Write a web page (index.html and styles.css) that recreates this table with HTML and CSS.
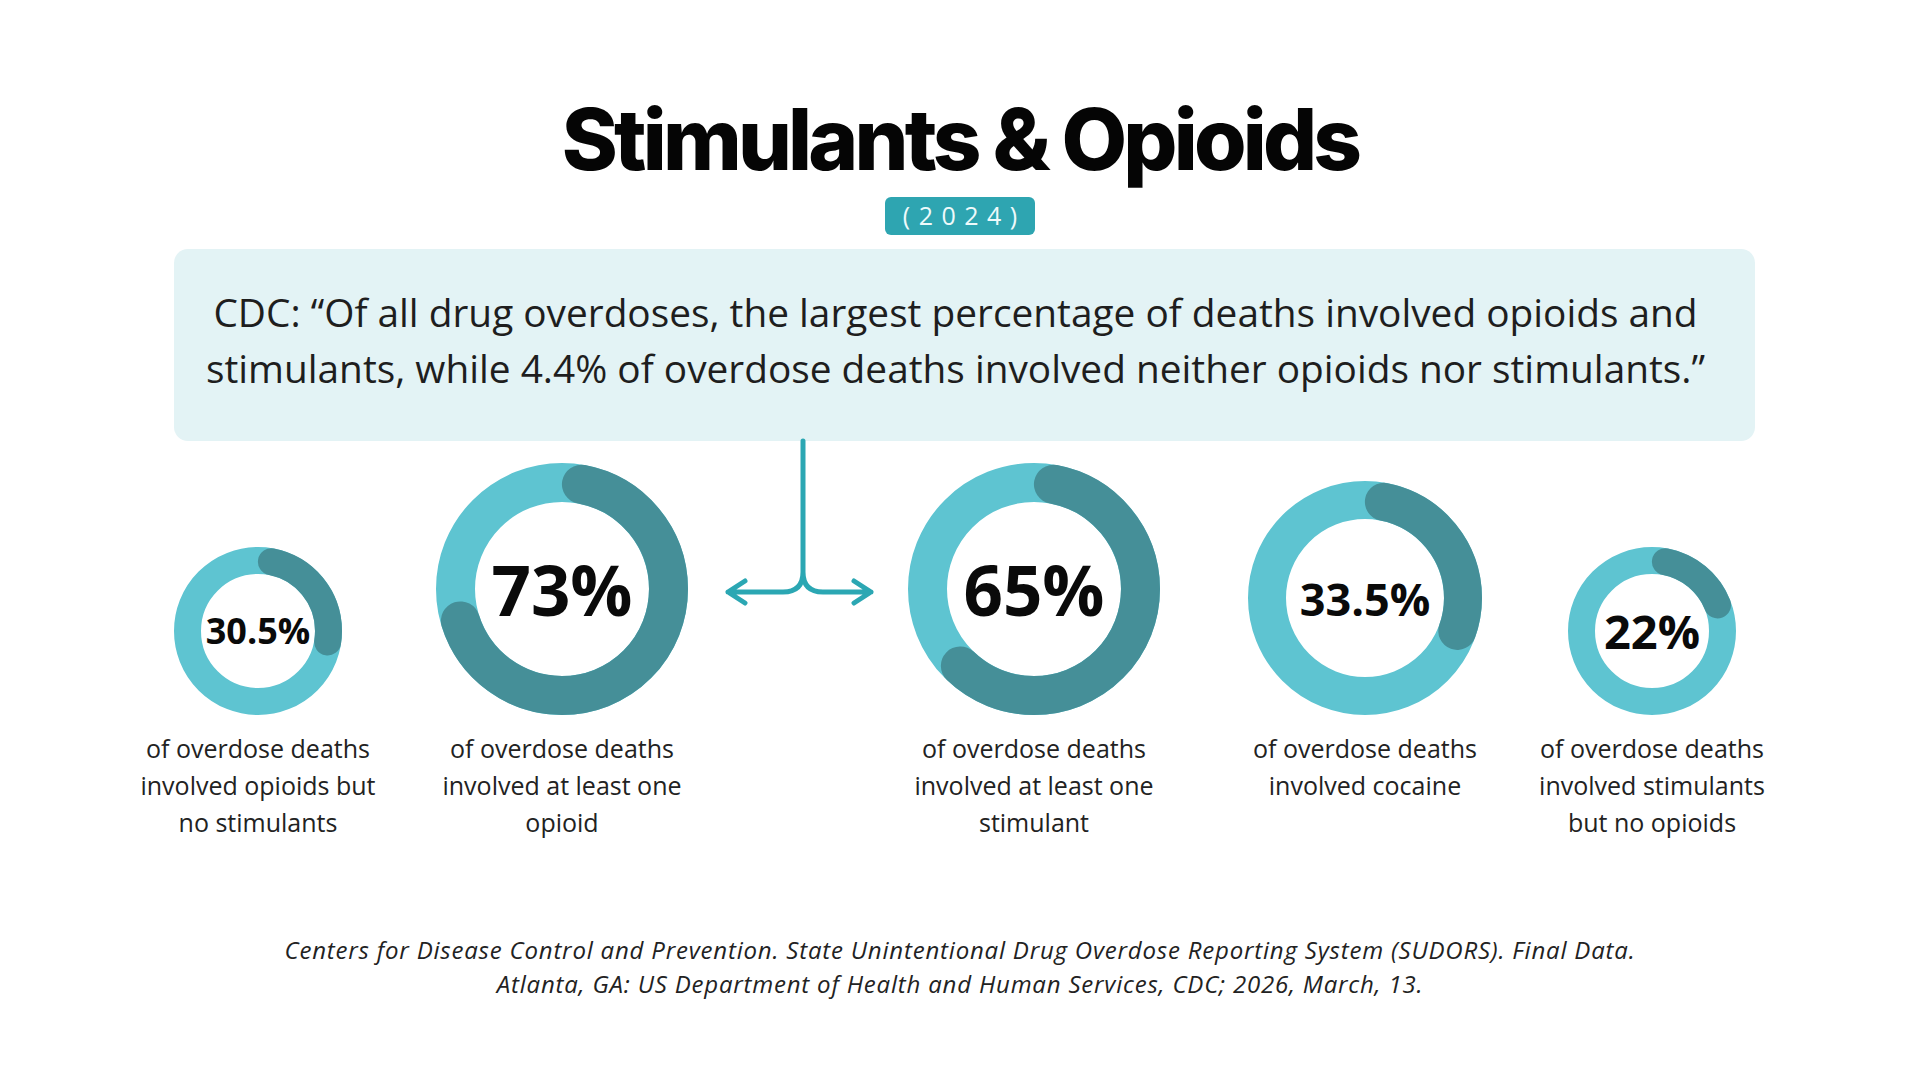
FILE: index.html
```html
<!DOCTYPE html>
<html lang="en">
<head>
<meta charset="utf-8">
<title>Stimulants &amp; Opioids</title>
<link rel="stylesheet" href="styles.css">
</head>
<body>
<main class="page">
  <h1 class="title">Stimulants &amp; Opioids</h1>
  <div class="year">(2024)</div>
  <section class="quote">
    <p>CDC: “Of all drug overdoses, the largest percentage of deaths involved opioids and<br>stimulants, while 4.4% of overdose deaths involved neither opioids nor stimulants.”</p>
  </section>

  <section class="stats">
    <div class="donut donut-sm">
      <svg viewBox="0 0 168 168" class="ring">
        <circle class="track" cx="84" cy="84" r="70.5" stroke-width="27"/>
        <circle class="arc" cx="84" cy="84" r="70.5" stroke-width="27" stroke-dasharray="108.1 1000" stroke-dashoffset="-13.5"/>
      </svg>
      <span class="pct pct-s1">30.5%</span>
    </div>
    <div class="donut donut-lg">
      <svg viewBox="0 0 252 252" class="ring">
        <circle class="track" cx="126" cy="126" r="106.5" stroke-width="39"/>
        <circle class="arc" cx="126" cy="126" r="106.5" stroke-width="39" stroke-dasharray="449.5 1000" stroke-dashoffset="-19.5"/>
      </svg>
      <span class="pct pct-lg">73%</span>
    </div>
    <div class="connector">
      <svg viewBox="0 0 140 170" width="140" height="170">
        <path d="M73 0 V131 Q73 151 53 151 H-2 M73 131 Q73 151 93 151 H141 M15 140 L-2 151 L15 162 M124 140 L141 151 L124 162"/>
      </svg>
    </div>
    <div class="donut donut-lg">
      <svg viewBox="0 0 252 252" class="ring">
        <circle class="track" cx="126" cy="126" r="106.5" stroke-width="39"/>
        <circle class="arc" cx="126" cy="126" r="106.5" stroke-width="39" stroke-dasharray="396 1000" stroke-dashoffset="-19.5"/>
      </svg>
      <span class="pct pct-lg">65%</span>
    </div>
    <div class="donut donut-md">
      <svg viewBox="0 0 234 234" class="ring">
        <circle class="track" cx="117" cy="117" r="98" stroke-width="38"/>
        <circle class="arc" cx="117" cy="117" r="98" stroke-width="38" stroke-dasharray="168.3 1000" stroke-dashoffset="-19"/>
      </svg>
      <span class="pct pct-md">33.5%</span>
    </div>
    <div class="donut donut-sm">
      <svg viewBox="0 0 168 168" class="ring">
        <circle class="track" cx="84" cy="84" r="70.5" stroke-width="27"/>
        <circle class="arc" cx="84" cy="84" r="70.5" stroke-width="27" stroke-dasharray="70.45 1000" stroke-dashoffset="-13.5"/>
      </svg>
      <span class="pct pct-s2">22%</span>
    </div>

    <p class="label">of overdose deaths<br>involved opioids but<br>no stimulants</p>
    <p class="label">of overdose deaths<br>involved at least one<br>opioid</p>
    <p class="label empty"></p>
    <p class="label">of overdose deaths<br>involved at least one<br>stimulant</p>
    <p class="label">of overdose deaths<br>involved cocaine</p>
    <p class="label">of overdose deaths<br>involved stimulants<br>but no opioids</p>
  </section>

  <footer class="source">
    <p>Centers for Disease Control and Prevention. State Unintentional Drug Overdose Reporting System (SUDORS). Final Data.<br>Atlanta, GA: US Department of Health and Human Services, CDC; 2026, March, 13.</p>
  </footer>
</main>
</body>
</html>
```
FILE: styles.css
```css
* { box-sizing: border-box; }
html, body { margin: 0; padding: 0; background: #ffffff; }
body { width: 1920px; height: 1080px; overflow: hidden; font-family: "Open Sans", "Noto Sans", sans-serif; color: #1c1c1c; }

.page {
  display: flex;
  flex-direction: column;
  align-items: center;
  padding-top: 97px;
}

.title {
  margin: 0;
  font-family: "Inter", "Liberation Sans", sans-serif;
  font-weight: 800;
  font-size: 85px;
  line-height: 85px;
  letter-spacing: -0.045em;
  color: #050505;
}

.year {
  margin-top: 15px;
  width: 150px;
  height: 38px;
  border-radius: 6px;
  background: #2ea5b1;
  color: #eefafb;
  font-family: "Open Sans", sans-serif;
  font-weight: 400;
  font-size: 25px;
  line-height: 36px;
  letter-spacing: 8.5px;
  text-indent: 8.5px;
  text-align: center;
}

.quote {
  align-self: flex-start;
  margin: 14px 0 0 174px;
  width: 1581px;
  height: 192px;
  padding: 35px 18px 0 0;
  border-radius: 14px;
  background: #e3f3f5;
}
.quote p {
  margin: 0;
  text-align: center;
  font-size: 38.8px;
  line-height: 56px;
  color: #1e1e1e;
}

.stats {
  align-self: flex-start;
  margin-left: 124px;
  display: grid;
  grid-template-columns: 268px 340px 135px 334px 328px 246px;
  grid-template-rows: 274px auto;
  row-gap: 15px;
}

.donut {
  display: grid;
  align-self: end;
  justify-self: center;
  place-items: center;
}
.donut > * { grid-area: 1 / 1; }
.donut-sm .ring { width: 168px; height: 168px; }
.donut-lg .ring { width: 252px; height: 252px; }
.donut-md .ring { width: 234px; height: 234px; }

.ring circle { fill: none; }
.ring .track { stroke: #5ec4d1; }
.ring .arc { stroke: #458f98; stroke-linecap: round; transform: rotate(-90deg); transform-origin: center; transform-box: fill-box; }

.pct {
  font-family: "Open Sans", sans-serif;
  font-weight: 700;
  color: #0a0a0a;
  line-height: 1;
}
.pct-s1 { font-size: 36px; }
.pct-lg { font-size: 69px; }
.pct-md { font-size: 45px; }
.pct-s2 { font-size: 47px; }

.connector { align-self: start; justify-self: center; }
.connector svg { display: block; overflow: visible; }
.connector path { fill: none; stroke: #2ba7b3; stroke-width: 5; stroke-linecap: round; stroke-linejoin: round; }

.label {
  margin: 0;
  text-align: center;
  font-size: 25px;
  line-height: 37px;
  color: #222222;
  white-space: nowrap;
}

.source {
  margin-top: 92px;
}
.source p {
  margin: 0;
  text-align: center;
  font-style: italic;
  font-size: 24px;
  line-height: 34px;
  letter-spacing: 0.8px;
  color: #222222;
}
```
